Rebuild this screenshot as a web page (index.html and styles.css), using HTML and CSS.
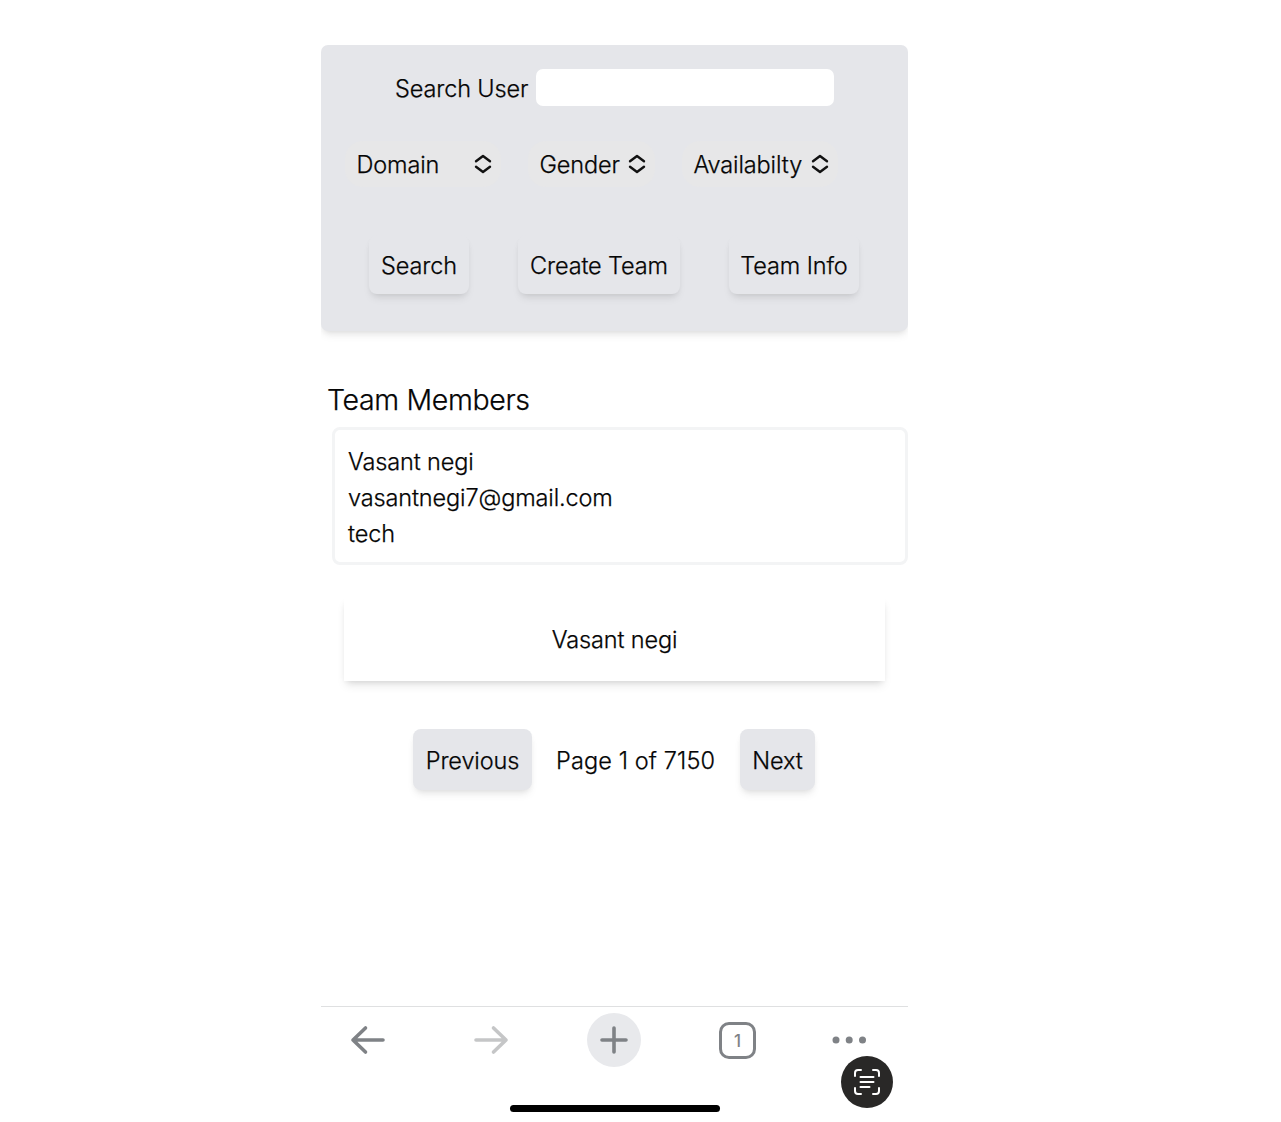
FILE: index.html
```html
<!DOCTYPE html>
<html lang="en">
<head>
<meta charset="utf-8">
<title>Team Members</title>
<link rel="stylesheet" href="styles.css">
</head>
<body>
<main class="phone">
  <section class="panel">
    <div class="search-row">
      <label class="search-label" for="user">Search User</label>
      <input class="search-input" id="user" type="text">
    </div>
    <div class="filters">
      <div class="select domain"><span>Domain</span><svg class="chevrons" viewBox="0 0 18 20"><path d="M2 7.3 9 2l7 5.3M2 12.7 9 18l7-5.3"/></svg></div>
      <div class="select gender"><span>Gender</span><svg class="chevrons" viewBox="0 0 18 20"><path d="M2 7.3 9 2l7 5.3M2 12.7 9 18l7-5.3"/></svg></div>
      <div class="select availability"><span>Availabilty</span><svg class="chevrons" viewBox="0 0 18 20"><path d="M2 7.3 9 2l7 5.3M2 12.7 9 18l7-5.3"/></svg></div>
    </div>
    <div class="actions">
      <button class="button search">Search</button>
      <button class="button create">Create Team</button>
      <button class="button info">Team Info</button>
    </div>
  </section>
  <h1 class="heading">Team Members</h1>
  <section class="member">
    <p>Vasant negi</p>
    <p>vasantnegi7@gmail.com</p>
    <p>tech</p>
  </section>
  <section class="user-card">Vasant negi</section>
  <div class="pager">
    <button class="button previous">Previous</button>
    <span class="page">Page 1 of 7150</span>
    <button class="button next">Next</button>
  </div>
  <nav class="toolbar">
    <svg class="icon back" viewBox="0 0 36 32"><path d="M33 16H3M15.500 4 3 16l12.500 12"/></svg>
    <svg class="icon forward" viewBox="0 0 36 32"><path d="M3 16h30M20.500 4 33 16 20.500 28"/></svg>
    <div class="new-tab"><svg class="icon plus" viewBox="0 0 30 30"><path d="M15 3v24M3 15h24"/></svg></div>
    <div class="tabs">1</div>
    <svg class="dots" viewBox="0 0 36 8"><circle cx="4" cy="4" r="3.500"/><circle cx="17.200" cy="4" r="3.500"/><circle cx="30.500" cy="4" r="3.500"/></svg>
  </nav>
  <div class="home-indicator"></div>
  <div class="scan"><svg viewBox="0 0 28 28"><path d="M2 8V5q0-3 3-3h3M20 2h3q3 0 3 3v3M26 20v3q0 3-3 3h-3M8 26H5q-3 0-3-3v-3M7.500 9h13M7.500 14h13M7.500 19h9"/></svg></div>
</main>
</body>
</html>
```

FILE: styles.css
```css
* { box-sizing: border-box; }
body {
  margin: 0;
  background: #fff;
  color: #050505;
  font: 360 23.5px/36px Inter, "Liberation Sans", sans-serif;
  letter-spacing: -.13px;
  -webkit-text-stroke: .25px #050505;
}
.phone {
  position: relative;
  width: 587px;
  height: 1122px;
  margin-left: 321px;
  padding-top: 45px;
  overflow: hidden;
  display: flex;
  flex-direction: column;
}
.panel {
  height: 286px;
  flex: none;
  padding: 24px 24px 0;
  background: #e5e6ea;
  border-radius: 7px;
  box-shadow: 0 6px 9px -2px rgba(0,0,0,.08), 0 3px 6px -3px rgba(0,0,0,.1);
}
.search-row { display: flex; height: 37px; align-items: center; padding-left: 50px; }
.search-label { width: 141px; white-space: nowrap; padding-top: 3px; }
.search-input { width: 297.500px; height: 36.500px; border: 0; border-radius: 7px; background: #fff; }
.filters { display: flex; margin-top: 35px; height: 46px; gap: 27px; }
.select {
  display: flex;
  align-items: center;
  justify-content: space-between;
  flex: none;
  white-space: nowrap;
  background: #e7e7e8;
  border-radius: 18px;
  padding: 0 9.500px 0 11.500px;
}
.select span { padding-top: 2px; }
.chevrons { width: 18px; height: 20px; fill: none; stroke: #111; stroke-width: 2.400; stroke-linecap: round; stroke-linejoin: round; }
.domain { width: 156px; }
.gender { width: 127px; }
.availability { width: 156px; }
.actions { display: flex; margin-top: 48px; padding-left: 24px; }
.button {
  display: flex;
  align-items: center;
  justify-content: center;
  border: 0;
  height: 59px;
  padding: 2px 0 0;
  color: inherit;
  font: inherit;
  letter-spacing: inherit;
  white-space: nowrap;
  background: #e5e6ea;
  border-radius: 8px;
  box-shadow: 0 6px 9px -2px rgba(0,0,0,.08), 0 3px 6px -3px rgba(0,0,0,.1);
}
.search { width: 100px; }
.create { width: 162px; margin-left: 49px; }
.info { width: 130px; margin-left: 49px; }
.heading { margin: 48px 0 0 6px; font-size: 28.500px; line-height: 42px; font-weight: 360; letter-spacing: -.35px; }
.member {
  width: 576px;
  height: 138px;
  margin: 6px 0 0 11px;
  padding: 14px 13px 12px;
  border: 3px solid #f3f4f5;
  border-radius: 8px;
}
.member p { margin: 0; line-height: 36.200px; }
.user-card {
  display: flex;
  align-items: center;
  justify-content: center;
  width: 541px;
  height: 84px;
  margin: 32px 0 0 23px;
  padding-top: 1px;
  box-shadow: 0 6px 9px -2px rgba(0,0,0,.1), 0 3px 6px -3px rgba(0,0,0,.12);
}
.pager { display: flex; align-items: center; margin: 48px 0 0 92px; }
.pager .button { height: 61px; }
.previous { width: 119px; }
.page { width: 160px; margin: 0 24px; padding-top: 2px; letter-spacing: .12px; white-space: nowrap; }
.next { width: 75px; }
.toolbar { display: flex; align-items: center; height: 67px; margin-top: 216px; border-top: 1px solid #dfe0e1; padding-left: 29px; }
.icon { fill: none; stroke: #7f8286; stroke-width: 3.600; stroke-linecap: round; stroke-linejoin: round; }
.back, .forward { width: 36px; height: 32px; }
.forward { margin-left: 87px; stroke: #c5c6c7; }
.new-tab { display: flex; align-items: center; justify-content: center; width: 54px; height: 54px; margin-left: 78px; border-radius: 50%; background: #e8e9ec; }
.plus { width: 30px; height: 30px; }
.tabs { width: 37px; height: 37px; margin-left: 78px; border: 3px solid #7f8286; border-radius: 10px; color: #7f8286; font: 550 17px/32px Inter, sans-serif; text-align: center; -webkit-text-stroke: 0; }
.dots { width: 36px; height: 8px; margin-left: 76px; fill: #7f8286; }
.home-indicator { width: 210px; height: 7px; margin: 32px 0 0 189px; border-radius: 4px; background: #000; }
.scan { position: absolute; left: 519.500px; top: 1056px; display: flex; align-items: center; justify-content: center; width: 52px; height: 52px; border-radius: 50%; background: #292827; }
.scan svg { width: 28px; height: 28px; fill: none; stroke: #fff; stroke-width: 2; stroke-linecap: round; }
```
